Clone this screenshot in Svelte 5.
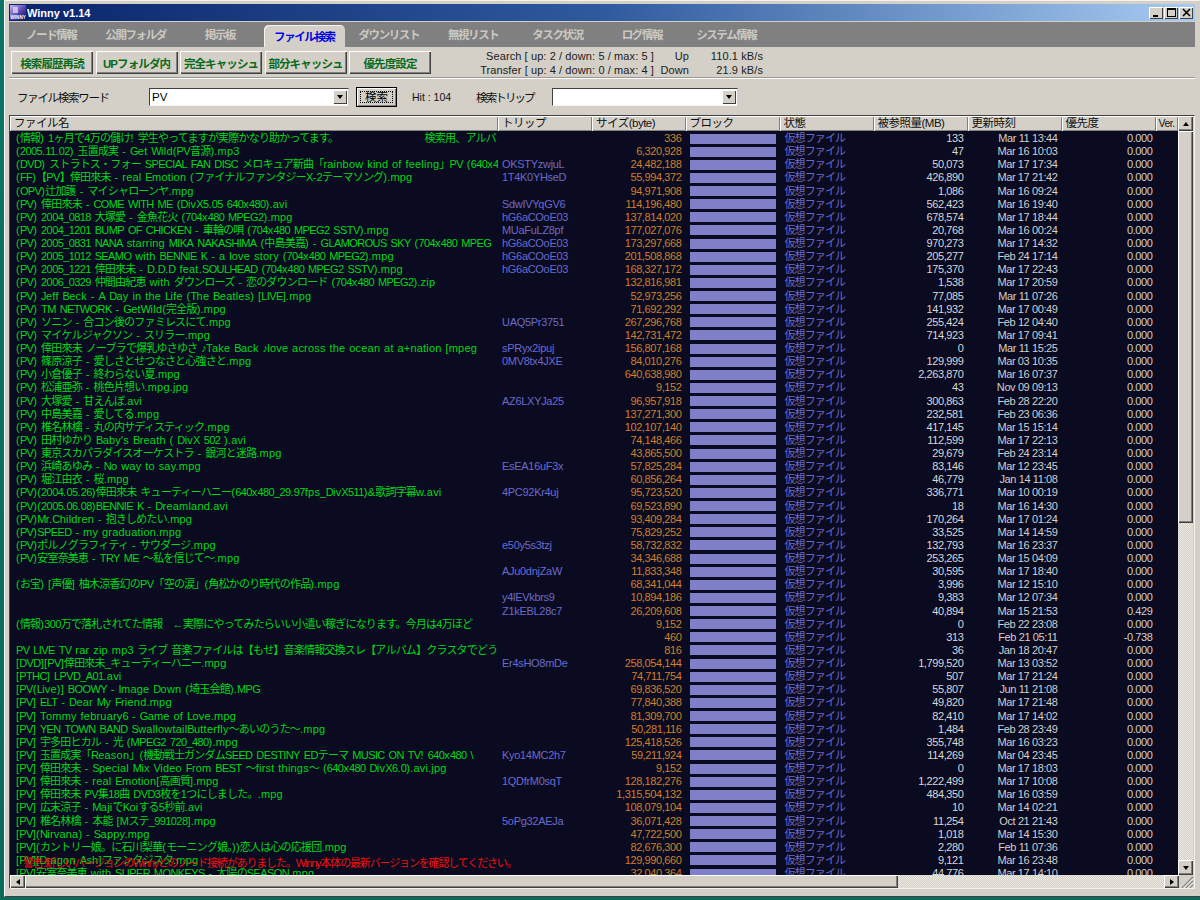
<script>
  const tabs = ["ノード情報", "公開フォルダ", "掲示板", "ファイル検索", "ダウンリスト", "無視リスト", "タスク状況", "ログ情報", "システム情報"];
  const tools = ["検索履歴再読", "UPフォルダ内", "完全キャッシュ", "部分キャッシュ", "優先度設定"];
  const cols = ["ファイル名", "トリップ", "サイズ(byte)", "ブロック", "状態", "被参照量(MB)", "更新時刻", "優先度", "Ver."];

  // name | trip | size | refs | time | priority
  const raw = `(情報)  1ヶ月で4万の儲け! 学生やってますが実際かなり助かってます。　　　　　　　　　検索用、アルバ||336|133|Mar 11 13:44
(2005.11.02) 玉置成実 - Get Wild(PV音源).mp3||6,320,928|47|Mar 16 10:03
(DVD) ストラトス・フォー SPECIAL FAN DISC メロキュア新曲「rainbow kind of feeling」PV (640x480|OKSTYzwjuL|24,482,188|50,073|Mar 17 17:34
(FF)【PV】倖田來未 - real Emotion (ファイナルファンタジーX-2テーマソング).mpg|1T4K0YHseD|55,994,372|426,890|Mar 17 21:42
(OPV)辻加護 - マイシャローンヤ.mpg||94,971,908|1,086|Mar 16 09:24
(PV) 倖田來未 - COME WITH ME (DivX5.05 640x480).avi|SdwIVYqGV6|114,196,480|562,423|Mar 16 19:40
(PV) 2004_0818 大塚愛 - 金魚花火 (704x480 MPEG2).mpg|hG6aCOoE03|137,814,020|678,574|Mar 17 18:44
(PV) 2004_1201 BUMP OF CHICKEN - 車輪の唄 (704x480 MPEG2 SSTV).mpg|MUaFuLZ8pf|177,027,076|20,768|Mar 16 00:24
(PV) 2005_0831 NANA starring MIKA NAKASHIMA (中島美嘉) - GLAMOROUS SKY (704x480 MPEG|hG6aCOoE03|173,297,668|970,273|Mar 17 14:32
(PV) 2005_1012 SEAMO with BENNIE K - a love story (704x480 MPEG2).mpg|hG6aCOoE03|201,508,868|205,277|Feb 24 17:14
(PV) 2005_1221 倖田來未 - D.D.D feat.SOULHEAD (704x480 MPEG2 SSTV).mpg|hG6aCOoE03|168,327,172|175,370|Mar 17 22:43
(PV) 2006_0329 仲間由紀恵 with ダウンローズ - 恋のダウンロード (704x480 MPEG2).zip||132,816,981|1,538|Mar 17 20:59
(PV) Jeff Beck - A Day in the Life (The Beatles) [LIVE].mpg||52,973,256|77,085|Mar 11 07:26
(PV) TM NETWORK - GetWild(完全版).mpg||71,692,292|141,932|Mar 17 00:49
(PV) ソニン - 合コン後のファミレスにて.mpg|UAQ5Pr3751|267,296,768|255,424|Feb 12 04:40
(PV) マイケルジャクソン - スリラー.mpg||142,731,472|714,923|Mar 17 09:41
(PV) 倖田來未 ノーブラで爆乳ゆさゆさ ♪Take Back ♪love across the ocean at a+nation [mpeg|sPRyx2ipuj|156,807,168|0|Mar 11 15:25
(PV) 篠原涼子 - 愛しさとせつなさと心強さと.mpg|0MV8tx4JXE|84,010,276|129,999|Mar 03 10:35
(PV) 小倉優子 - 終わらない夏.mpg||640,638,980|2,263,870|Mar 16 07:37
(PV) 松浦亜弥 - 桃色片想い.mpg.jpg||9,152|43|Nov 09 09:13
(PV) 大塚愛 - 甘えんぼ.avi|AZ6LXYJa25|96,957,918|300,863|Feb 28 22:20
(PV) 中島美嘉 - 愛してる.mpg||137,271,300|232,581|Feb 23 06:36
(PV) 椎名林檎 - 丸の内サディスティック.mpg||102,107,140|417,145|Mar 15 15:14
(PV) 田村ゆかり Baby's Breath ( DivX 502 ).avi||74,148,466|112,599|Mar 17 22:13
(PV) 東京スカパラダイスオーケストラ - 銀河と迷路.mpg||43,865,500|29,679|Feb 24 23:14
(PV) 浜崎あゆみ - No way to say.mpg|EsEA16uF3x|57,825,284|83,146|Mar 12 23:45
(PV) 堀江由衣 - 桜.mpg||60,856,264|46,779|Jan 14 11:08
(PV)(2004.05.26)倖田來未 キューティーハニー(640x480_29.97fps_DivX511)&歌詞字幕w.avi|4PC92Kr4uj|95,723,520|336,771|Mar 10 00:19
(PV)(2005.06.08)BENNIE K - Dreamland.avi||69,523,890|18|Mar 16 14:30
(PV)Mr.Children - 抱きしめたい.mpg||93,409,284|170,264|Mar 17 01:24
(PV)SPEED - my graduation.mpg||75,829,252|33,525|Mar 14 14:59
(PV)ポルノグラフィティ - サウダージ.mpg|e50y5s3tzj|58,732,832|132,793|Mar 16 23:37
(PV)安室奈美恵 - TRY ME 〜私を信じて〜.mpg||34,346,688|253,265|Mar 15 04:09
|AJu0dnjZaW|11,833,348|30,595|Mar 17 18:40
(お宝) [声優] 柚木涼香幻のPV「空の涙」(角松かのり時代の作品).mpg||68,341,044|3,996|Mar 12 15:10
|y4lEVkbrs9|10,894,186|9,383|Mar 12 07:34
|Z1kEBL28c7|26,209,608|40,894|Mar 15 21:53|0.429
(情報)300万で落札されてた情報　←実際にやってみたらいい小遣い稼ぎになります。今月は4万ほど||9,152|0|Feb 22 23:08
||460|313|Feb 21 05:11|-0.738
PV LIVE TV rar zip mp3 ライブ 音楽ファイルは【もせ】音楽情報交換スレ【アルバム】クラスタでどうぞ♪||816|36|Jan 18 20:47
[DVD][PV]倖田來未_キューティーハニー.mpg|Er4sHO8mDe|258,054,144|1,799,520|Mar 13 03:52
[PTHC] LPVD_A01.avi||74,711,754|507|Mar 17 21:24
[PV(Live)] BOOWY - Image Down (埼玉会館).MPG||69,836,520|55,807|Jun 11 21:08
[PV] ELT - Dear My Friend.mpg||77,840,388|49,820|Mar 17 21:48
[PV] Tommy february6 - Game of Love.mpg||81,309,700|82,410|Mar 17 14:02
[PV] YEN TOWN BAND SwallowtailButterfly〜あいのうた〜.mpg||50,281,116|1,484|Feb 28 23:49
[PV] 宇多田ヒカル - 光 (MPEG2 720_480).mpg||125,418,526|355,748|Mar 16 03:23
[PV] 玉置成実「Reason」(機動戦士ガンダムSEED DESTINY EDテーマ MUSIC ON TV! 640x480 \\|Kyo14MC2h7|59,211,924|114,269|Mar 04 23:45
[PV] 倖田來未 - Special Mix Video From BEST 〜first things〜 (640x480 DivX6.0).avi.jpg||9,152|0|Mar 17 18:03
[PV] 倖田來未 - real Emotion[高画質].mpg|1QDfrM0sqT|128,182,276|1,222,499|Mar 17 10:08
[PV] 倖田來未 PV集18曲 DVD3枚を1つにしました。.mpg||1,315,504,132|484,350|Mar 16 03:59
[PV] 広末涼子 - MajiでKoiする5秒前.avi||108,079,104|10|Mar 14 02:21
[PV] 椎名林檎 - 本能 [Mステ_991028].mpg|5oPg32AEJa|36,071,428|11,254|Oct 21 21:43
[PV](Nirvana) - Sappy.mpg||47,722,500|1,018|Mar 14 15:30
[PV](カントリー娘。に石川梨華(モーニング娘。))恋人は心の応援団.mpg||82,676,300|2,280|Feb 11 07:36
[PV][Dragon Ash]ファンタジスタ.mpg||129,990,660|9,121|Mar 16 23:48
[PV]安室奈美恵 with SUPER MONKEYS - 太陽のSEASON.mpg||32,040,364|44,776|Mar 17 14:10`;

  const rows = raw.split("\n").map((l) => {
    const [name, trip, size, refs, time, pri] = l.split("|");
    return { name, trip, size, refs, time, pri: pri || "0.000" };
  });

  // the original bitmap font: narrow caps and digits, wider lowercase, fixed kanji
  const jp = /[\u2190-\u2193\u266a\u3000-\u30ff\u4e00-\u9fff\uff00-\uffef]/;
  const caps = /[A-Z0-9_]/;
  const parts = (s) => s.split(/([\u2190-\u2193\u266a\u3000-\u30ff\u4e00-\u9fff\uff00-\uffef]+|[A-Z0-9_]+)/).filter(Boolean);
</script>

<div class="desktop">
  <div class="window">
    <div class="title">
      <svg class="logo" width="16" height="15" viewBox="0 0 16 15">
        <defs>
          <linearGradient id="lg" x1="0" y1="0" x2="1" y2="1">
            <stop offset="0" stop-color="#c8b8f0" />
            <stop offset="0.6" stop-color="#4a3aa8" />
            <stop offset="1" stop-color="#101050" />
          </linearGradient>
        </defs>
        <rect width="16" height="15" fill="url(#lg)" />
        <rect x="3" y="2" width="5" height="6" fill="#e8e0ff" opacity="0.7" />
        <text x="0.5" y="14" font-size="4.6" font-weight="700" fill="#fff" font-family="Liberation Sans">WINNY</text>
      </svg>
      <span class="title-text">Winny v1.14</span>
      <div class="caption-btns">
        <span class="cap">
          <svg width="9" height="9" viewBox="0 0 9 9"><rect x="1" y="7" width="5" height="2" /></svg>
        </span>
        <span class="cap">
          <svg width="9" height="9" viewBox="0 0 9 9"><path d="M0 0h9v9H0zM1 2v6h7V2z" fill-rule="evenodd" /></svg>
        </span>
        <span class="cap close">
          <svg width="9" height="9" viewBox="0 0 9 9"><path d="M1 1l7 7M8 1l-7 7" stroke="#000" stroke-width="1.6" /></svg>
        </span>
      </div>
    </div>

    <div class="tabs">
      {#each tabs as t, i}
        <div class="tab" class:active={i === 3}><span>{t}</span></div>
      {/each}
    </div>

    <div class="toolbar">
      <div class="tools">
        {#each tools as t}
          <div class="tool">{t}</div>
        {/each}
      </div>
      <div class="stats">
        <span class="st-a">Search [ up: 2 / down: 5 / max: 5 ]</span><span class="st-b">Up</span><span class="st-c">110.1 kB/s</span>
        <span class="st-a">Transfer [ up: 4 / down: 0 / max: 4 ]</span><span class="st-b">Down</span><span class="st-c">21.9 kB/s</span>
      </div>
    </div>

    <div class="searchrow">
      <span class="lbl word">ファイル検索ワード</span>
      <div class="combo first">
        <span class="combo-val">PV</span>
        <span class="drop"><i></i></span>
      </div>
      <div class="gobtn"><span>検索</span></div>
      <span class="lbl hit">Hit : 104</span>
      <span class="lbl trip-lbl">検索トリップ</span>
      <div class="combo second">
        <span class="combo-val"></span>
        <span class="drop"><i></i></span>
      </div>
    </div>

    <div class="frame">
      <div class="main">
        <div class="listcol">
          <div class="row head">
            {#each cols as c}
              <div class="hcell">{c}</div>
            {/each}
          </div>
          <div class="body">
            {#each rows as r}
              <div class="row item">
                <div class="c name">{#each parts(r.name) as p}<span class:jp={jp.test(p)} class:caps={caps.test(p[0])}>{p}</span>{/each}</div>
                <div class="c trip">{r.trip}</div>
                <div class="c size">{r.size}</div>
                <div class="c block"><div class="bar"></div></div>
                <div class="c state">仮想ファイル</div>
                <div class="c refs">{r.refs}</div>
                <div class="c time">{r.time}</div>
                <div class="c pri">{r.pri}</div>
                <div class="c"></div>
              </div>
            {/each}
            <div class="warning">警告:新しいバージョンのWinnyとのノード接続がありました。Winny本体の最新バージョンを確認してください。</div>
          </div>
        </div>
        <div class="vbar">
          <span class="arrow"><i class="up"></i></span>
          <div class="vthumb"></div>
          <div class="track"></div>
          <span class="arrow"><i class="down"></i></span>
        </div>
      </div>
      <div class="hbar">
        <span class="arrow"><i class="left"></i></span>
        <div class="hthumb"></div>
        <div class="track"></div>
        <span class="arrow"><i class="right"></i></span>
        <div class="grip">
          <svg width="15" height="13" viewBox="0 0 15 13">
            <path d="M14 2L3 13M14 6L7 13M14 10L11 13" stroke="#808080" stroke-width="1.2" />
            <path d="M14 3.5L4.5 13M14 7.5L8.5 13M14 11.5L12.5 13" stroke="#fff" stroke-width="0.8" />
          </svg>
        </div>
      </div>
    </div>
  </div>
</div>

<style>
  :global(body) {
    margin: 0;
    background: #0b7565;
  }
  .desktop {
    width: 1200px;
    height: 900px;
    overflow: hidden;
    background: linear-gradient(#0b7565, #0a6a5c);
    padding-left: 4px;
    box-sizing: border-box;
    font-family: "Liberation Sans", "Noto Sans CJK JP", sans-serif;
    font-size: 11px;
    color: #000;
  }
  .window {
    height: 897px;
    box-sizing: border-box;
    background: #d4d0c8;
    border-left: 1px solid #fff;
    border-top: 1px solid #f4f2ec;
    border-bottom: 1px solid #404040;
    padding: 3px 5px 0 4px;
    display: flex;
    flex-direction: column;
  }

  .title {
    height: 17px;
    flex: none;
    display: flex;
    align-items: center;
    background: linear-gradient(90deg, #0a246a, #2f5a9e 50%, #a6caf0);
    padding-left: 1px;
  }
  .logo {
    flex: none;
  }
  .title-text {
    margin-left: 1px;
    color: #fff;
    font-weight: 700;
    font-size: 11px;
  }
  .caption-btns {
    margin-left: auto;
    display: flex;
    gap: 1px;
    padding-right: 2px;
  }
  .cap {
    width: 14px;
    height: 12px;
    background: #d4d0c8;
    box-shadow: inset 1px 1px 0 #fff, inset -1px -1px 0 #404040;
    display: flex;
    align-items: center;
    justify-content: center;
  }

  .tabs {
    margin-top: 1px;
    height: 25px;
    flex: none;
    background: #808080;
    display: flex;
  }
  .tab {
    width: 84.4px;
    flex: none;
    display: flex;
    justify-content: center;
    align-items: flex-end;
    color: #ccc8c0;
    font-size: 11.5px;
    font-weight: 700;
    letter-spacing: -1.4px;
    padding-bottom: 5px;
    box-sizing: border-box;
  }
  .tab.active {
    width: 81px;
    margin: 3px 1.7px 0;
    background: #d4d0c8;
    color: #0000e0;
    border-radius: 5px 5px 0 0;
    box-shadow: inset 1px 1px 0 #f4f2ec;
    padding-bottom: 3px;
  }

  .toolbar {
    height: 31px;
    flex: none;
    display: flex;
    border-bottom: 1px solid #9a9890;
    box-shadow: 0 1px 0 #fff;
    box-sizing: border-box;
  }
  .tools {
    display: flex;
    gap: 2.5px;
    padding: 4px 0 0 2px;
  }
  .tool {
    width: 82px;
    height: 23px;
    box-sizing: border-box;
    background: #d4d0c8;
    box-shadow: inset 1px 1px 0 #fff, inset -1px -1px 0 #404040, inset -2px -2px 0 #808080;
    color: #0a6a1a;
    font-weight: 700;
    font-size: 11.5px;
    letter-spacing: -0.9px;
    display: flex;
    align-items: center;
    justify-content: center;
  }
  .stats {
    margin-left: 50px;
    margin-top: 2px;
    display: grid;
    grid-template-columns: 173px 35px 74px;
    grid-auto-rows: 14px;
    font-size: 11px;
    letter-spacing: 0.1px;
    line-height: 14px;
    color: #202020;
  }
  .st-a,
  .st-b,
  .st-c {
    text-align: right;
    white-space: nowrap;
  }
  .st-a {
    display: flex;
    justify-content: flex-end;
  }

  .searchrow {
    height: 37px;
    flex: none;
    display: flex;
    align-items: center;
    box-sizing: border-box;
  }
  .lbl {
    font-size: 11.5px;
    white-space: nowrap;
    color: #101010;
  }
  .word {
    margin-left: 8px;
    width: 132px;
    letter-spacing: -1.3px;
  }
  .combo {
    height: 18px;
    background: #fff;
    box-sizing: border-box;
    border: 1px solid #404040;
    border-right-color: #d4d0c8;
    border-bottom-color: #f4f4f4;
    display: flex;
    align-items: center;
    justify-content: space-between;
  }
  .combo.first {
    width: 200px;
  }
  .combo.second {
    width: 186px;
    margin-left: 18px;
  }
  .combo-val {
    padding-left: 2px;
    font-size: 11.5px;
  }
  .drop {
    width: 14px;
    height: 14px;
    margin-right: 1px;
    background: #d4d0c8;
    box-shadow: inset 1px 1px 0 #fff, inset -1px -1px 0 #404040;
    display: flex;
    align-items: center;
    justify-content: center;
  }
  .drop i,
  .arrow i.down {
    width: 0;
    height: 0;
    border: 3.5px solid transparent;
    border-top: 4px solid #000;
    border-bottom: 0;
  }
  .gobtn {
    width: 41px;
    height: 20px;
    margin-left: 7px;
    box-sizing: border-box;
    border: 1px solid #000;
    background: #d4d0c8;
    box-shadow: inset 1px 1px 0 #fff, inset -1px -1px 0 #808080;
    padding: 3px;
    display: flex;
  }
  .gobtn span {
    flex: 1;
    border: 1px dotted #000;
    display: flex;
    align-items: center;
    justify-content: center;
    font-size: 11.5px;
    line-height: 10px;
  }
  .hit {
    margin-left: 15px;
    font-size: 10.5px;
  }
  .trip-lbl {
    margin-left: 25px;
    letter-spacing: -1.9px;
  }

  .frame {
    height: 774px;
    flex: none;
    box-sizing: border-box;
    border: 1px solid #404040;
    border-right-color: #f4f2ec;
    border-bottom-color: #f4f2ec;
    display: flex;
    flex-direction: column;
    overflow: hidden;
  }
  .main {
    flex: 1;
    display: flex;
    min-height: 0;
  }
  .listcol {
    width: 1168px;
    flex: none;
    display: flex;
    flex-direction: column;
  }
  .row {
    display: grid;
    grid-template-columns: 488px 94px 93.5px 94px 94px 94px 94px 94px 22.5px;
  }
  .head {
    height: 15px;
    flex: none;
  }
  .hcell {
    background: #d4d0c8;
    box-shadow: inset 1px 1px 0 #fff, inset -1px -1px 0 #808080;
    padding-left: 4px;
    font-size: 11.5px;
    line-height: 15px;
    letter-spacing: -0.5px;
    overflow: hidden;
    white-space: nowrap;
    color: #101010;
  }
  .hcell:last-child {
    padding-left: 3px;
    font-size: 10.5px;
  }
  .body {
    flex: 1;
    min-height: 0;
    background: #0a0a20;
    overflow: hidden;
    position: relative;
    padding-top: 1px;
  }
  .item {
    height: 13.125px;
    line-height: 13.125px;
    font-size: 11px;
    letter-spacing: -0.4px;
  }
  .c {
    overflow: hidden;
    white-space: nowrap;
  }
  .name {
    color: #00d818;
    padding-left: 6px;
    letter-spacing: 0.2px;
    word-spacing: 0.6px;
  }
  .jp {
    letter-spacing: -0.8px;
  }
  .caps {
    letter-spacing: -0.6px;
  }
  .trip {
    color: #6a6acc;
    padding-left: 4px;
    letter-spacing: -0.3px;
  }
  .size {
    color: #d0802a;
    text-align: right;
    padding-right: 4px;
  }
  .block {
    padding: 1.5px 4px 1.5px 4px;
    box-sizing: border-box;
  }
  .bar {
    height: 10px;
    background: #8080c8;
  }
  .state {
    color: #6a6acc;
    padding-left: 5px;
    letter-spacing: -0.9px;
  }
  .refs {
    color: #d8d8d8;
    text-align: right;
    padding-right: 4px;
  }
  .time {
    color: #d0d0d0;
    text-align: right;
    padding-right: 4px;
  }
  .pri {
    color: #d0d0d0;
    text-align: right;
    padding-right: 3px;
  }
  .warning {
    position: absolute;
    left: 13px;
    bottom: 5px;
    color: #f01010;
    font-size: 11px;
    letter-spacing: -1.15px;
    line-height: 13px;
    white-space: nowrap;
  }

  .vbar {
    width: 15px;
    flex: none;
    display: flex;
    flex-direction: column;
  }
  .arrow {
    width: 15px;
    height: 15px;
    flex: none;
    background: #d4d0c8;
    box-sizing: border-box;
    box-shadow: inset 1px 1px 0 #fff, inset -1px -1px 0 #404040, inset -2px -2px 0 #808080;
    display: flex;
    align-items: center;
    justify-content: center;
  }
  .arrow i.up {
    width: 0;
    height: 0;
    border: 3.5px solid transparent;
    border-bottom: 4px solid #000;
    border-top: 0;
  }
  .arrow i.left {
    width: 0;
    height: 0;
    border: 3.5px solid transparent;
    border-right: 4px solid #000;
    border-left: 0;
  }
  .arrow i.right {
    width: 0;
    height: 0;
    border: 3.5px solid transparent;
    border-left: 4px solid #000;
    border-right: 0;
  }
  .vthumb {
    height: 392px;
    flex: none;
    background: #d4d0c8;
    box-shadow: inset 1px 1px 0 #fff, inset -1px -1px 0 #404040, inset -2px -2px 0 #808080;
  }
  .track {
    flex: 1;
    background: repeating-conic-gradient(#ece9e2 0 25%, #d4d0c8 0 50%) 0 0 / 2px 2px;
  }
  .hbar {
    height: 13px;
    flex: none;
    display: flex;
  }
  .hbar .arrow {
    height: 13px;
  }
  .hthumb {
    width: 873px;
    flex: none;
    background: #d4d0c8;
    box-shadow: inset 1px 1px 0 #fff, inset -1px -1px 0 #404040, inset -2px -2px 0 #808080;
  }
  .grip {
    width: 15px;
    flex: none;
    background: #d4d0c8;
  }
</style>
